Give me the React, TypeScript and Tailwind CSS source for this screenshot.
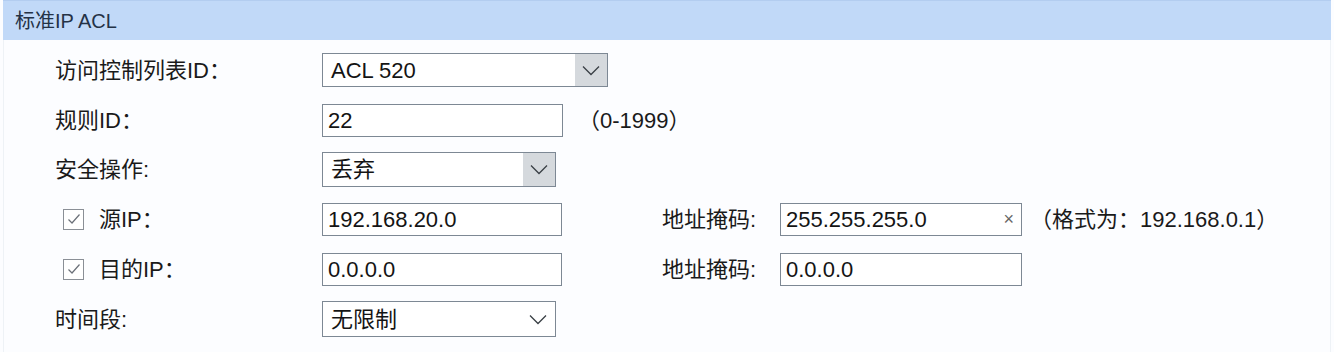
import React from "react";

const font = { fontFamily: '"Liberation Sans", "Noto Sans CJK SC", sans-serif' };

function Chevron() {
  return (
    <svg width="18" height="11" viewBox="0 0 18 11" fill="none">
      <path d="M1 1.5 L9 9.5 L17 1.5" stroke="#3a3f45" strokeWidth="1.3" />
    </svg>
  );
}

function Check() {
  return (
    <div className="w-[21px] h-[21px] border border-[#8a8f96] bg-white flex items-center justify-center">
      <svg width="14" height="12" viewBox="0 0 14 12" fill="none">
        <path d="M1.5 6.5 L5 10 L12.5 1.5" stroke="#6b7078" strokeWidth="1.2" />
      </svg>
    </div>
  );
}

function Select({ value, w, btn = true, h = "h-[34px]" }: { value: string; w: string; btn?: boolean; h?: string }) {
  return (
    <div className={`${w} ${h} border border-[#7d8894] bg-white flex items-stretch`}>
      <div className="flex-1 flex items-center pl-[8px] text-[22px] text-[#141414]">{value}</div>
      {btn ? (
        <div className="w-[32px] bg-[#d5d9dd] flex items-center justify-center">
          <Chevron />
        </div>
      ) : (
        <div className="w-[34px] flex items-center justify-center">
          <Chevron />
        </div>
      )}
    </div>
  );
}

function Input({ value, w, clear = false }: { value: string; w: string; clear?: boolean }) {
  return (
    <div className={`${w} h-[33px] border border-[#7d8894] bg-white flex items-center pl-[5px] pr-[7px] text-[22px] text-[#141414]`}>
      <span className="flex-1">{value}</span>
      {clear && <span className="text-[18px] text-[#666]">×</span>}
    </div>
  );
}

export default function App() {
  return (
    <div className="w-[1334px] h-[352px] bg-[#fcfdff] px-[3px] overflow-hidden" style={font}>
      <div className="h-[40px] bg-[#c1d9f8] border-t border-[#b3cdf0] flex items-center pl-[12px] text-[20px] text-[#243246]">
        标准IP ACL
      </div>
      <div className="h-[312px] border-x border-[#eef2f6] flex flex-col pt-[5px] text-[22px] text-[#1a1a1a]">
        <div className="h-[50px] flex items-center">
          <div className="w-[318px] pl-[51px]">访问控制列表ID：</div>
          <Select value="ACL 520" w="w-[286px]" />
        </div>
        <div className="h-[50px] flex items-center">
          <div className="w-[318px] pl-[51px]">规则ID：</div>
          <Input value="22" w="w-[241px]" />
          <div className="ml-[15px]">（0-1999）</div>
        </div>
        <div className="h-[49px] flex items-center">
          <div className="w-[318px] pl-[51px]">安全操作:</div>
          <Select value="丢弃" w="w-[234px]" h="h-[35px]" />
        </div>
        <div className="h-[50px] flex items-center">
          <div className="w-[318px] pl-[59px] flex items-center">
            <Check />
            <span className="ml-[15px]">源IP：</span>
          </div>
          <Input value="192.168.20.0" w="w-[240px]" clear={false} />
          <div className="w-[218px] pl-[100px]">地址掩码:</div>
          <Input value="255.255.255.0" w="w-[242px]" clear />
          <div className="ml-[8px]">（格式为：192.168.0.1）</div>
        </div>
        <div className="h-[50px] flex items-center">
          <div className="w-[318px] pl-[59px] flex items-center">
            <Check />
            <span className="ml-[15px]">目的IP：</span>
          </div>
          <Input value="0.0.0.0" w="w-[240px]" />
          <div className="w-[218px] pl-[100px]">地址掩码:</div>
          <Input value="0.0.0.0" w="w-[242px]" />
        </div>
        <div className="h-[50px] flex items-center">
          <div className="w-[318px] pl-[51px]">时间段:</div>
          <Select value="无限制" w="w-[234px]" btn={false} h="h-[36px]" />
        </div>
      </div>
    </div>
  );
}
